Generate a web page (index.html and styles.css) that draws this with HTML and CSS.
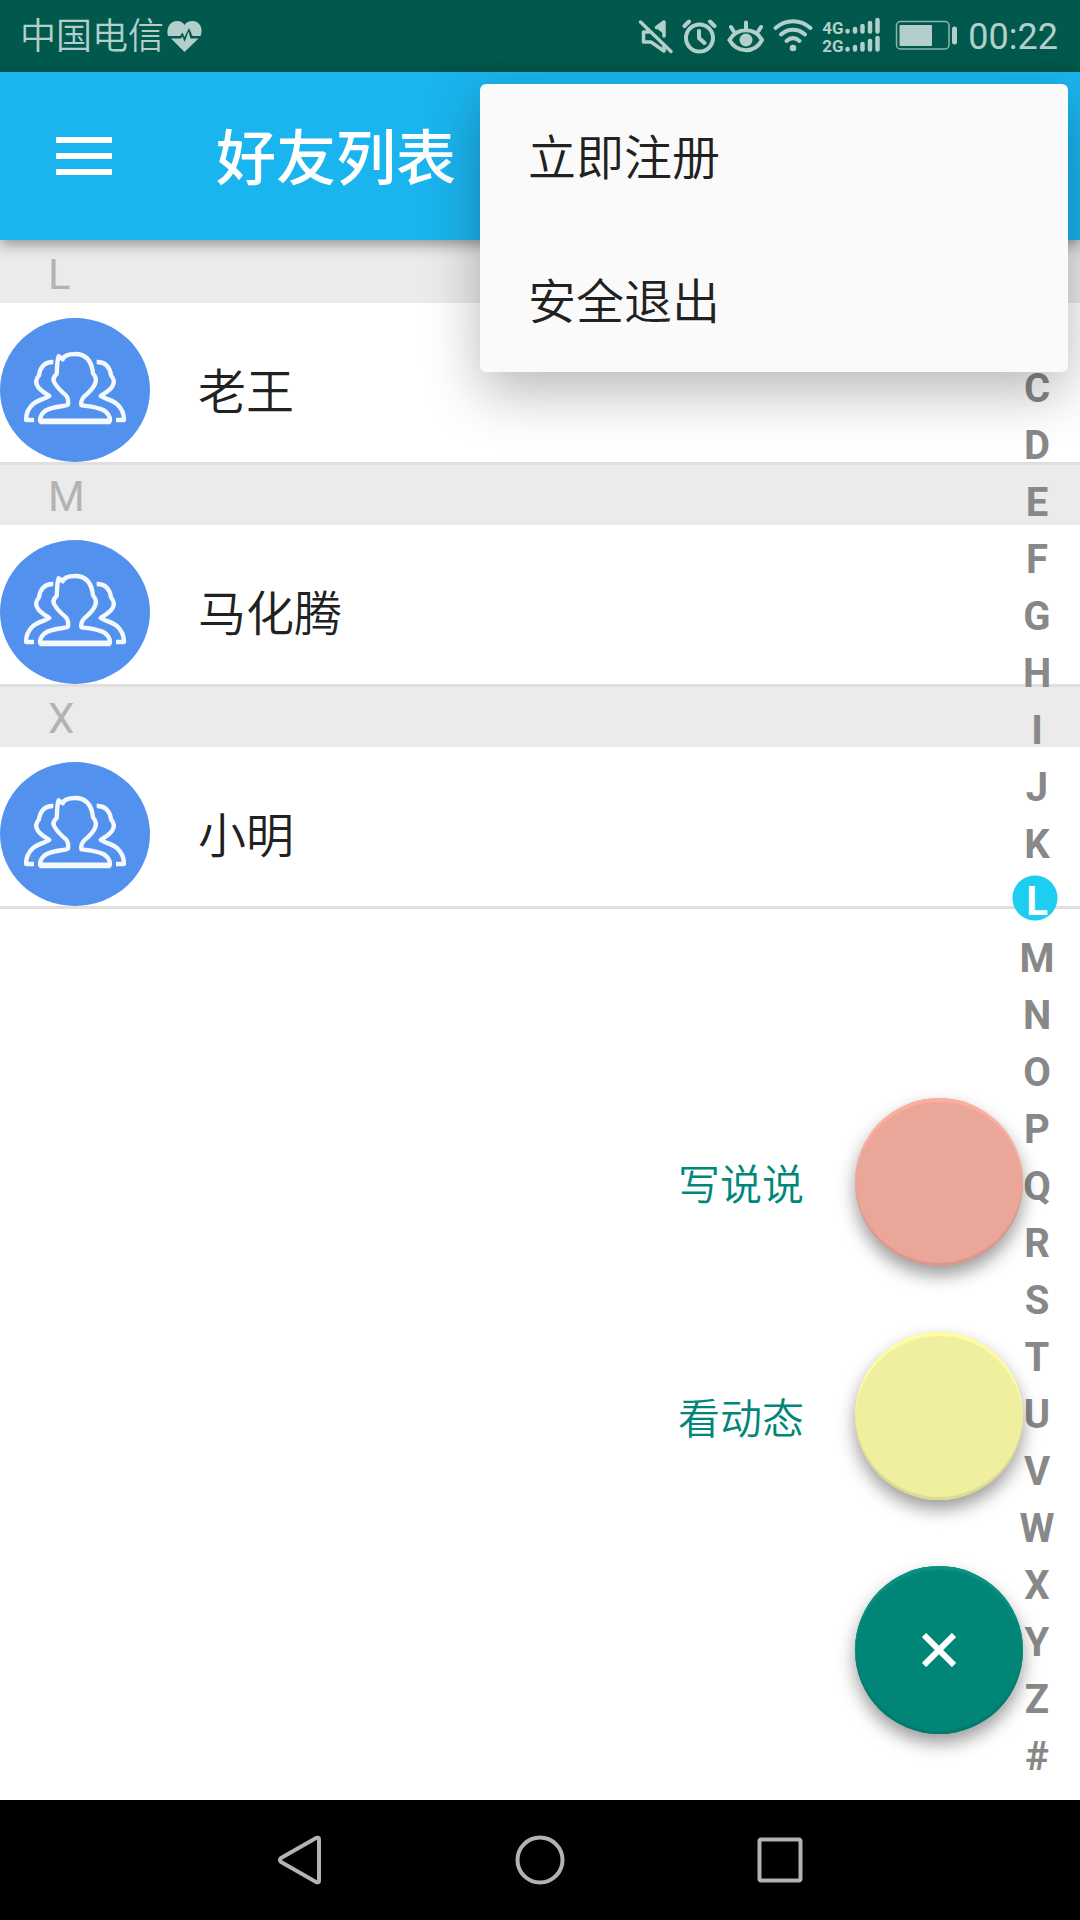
FILE: index.html
```html
<!DOCTYPE html>
<html lang="zh-CN">
<head>
<meta charset="utf-8">
<meta name="viewport" content="width=device-width, initial-scale=1">
<title>好友列表</title>
<link rel="stylesheet" href="styles.css">
</head>
<body>
<svg class="defs" aria-hidden="true">
  <symbol id="avatar" viewBox="0 0 450 432" preserveAspectRatio="none">
    <ellipse cx="225" cy="216" rx="225" ry="216" fill="#5391ef"/>
    <g fill="none" stroke="#f4f8ff" stroke-width="13" stroke-linejoin="round">
      <path d="M160 132C134 131 120 148 117 172C108 182 106 194 113 205C119 217 133 224 148 234C138 243 116 243 98 259C82 274 78 290 78 306H102"/>
      <path d="M290 132C316 131 330 148 333 172C342 182 344 194 337 205C331 217 317 224 302 234C312 243 334 243 352 259C368 274 372 290 372 306H348"/>
      <path d="M176 115L188 124C192 112 208 108 225 108C256 108 275 128 279 166C288 176 291 187 284 200C278 214 264 226 252 236C242 246 243 254 244 262C262 264 290 266 310 276C326 285 330 296 330 308H120C120 296 124 285 140 276C160 266 188 266 204 260C206 246 205 240 198 232C186 222 172 208 166 198C158 188 158 178 170 168C172 150 170 130 176 115Z"/>
      <path d="M118 312H332" stroke-width="14"/>
    </g>
  </symbol>
</svg>

<div class="status-bar">
  <div class="carrier">
    <span>中国电信</span>
    <svg width="36" height="36" viewBox="167 19 36 36" aria-hidden="true">
      <path fill="#b3cfcb" d="M184.500 52L171 38.500H181L182.500 36.500L184.500 42L188.500 31.500L190.500 38.500H198.500ZM168 36C166 30 169 21 177 21C181 21 183.500 23 184.500 25C186 22.500 189 21 192.500 21C200 21 203.500 29 200.500 36H192.500L189 28L184.500 37L182.500 32.500L180 36Z"/>
    </svg>
  </div>
  <div class="indicators">
    <svg width="36" height="72" viewBox="638 0 36 72" fill="none" stroke="#b3cfcb" stroke-width="3.500" stroke-linecap="round" stroke-linejoin="round" aria-hidden="true">
      <path d="M640.500 22L671 51.500M664 36V22L656.500 27.500M649 32H643.500V42H651L664 51V46"/>
      <path d="M656 28L664 22V34Z" fill="#b3cfcb" stroke="none"/>
    </svg>
    <svg width="36" height="72" viewBox="682 0 36 72" fill="none" stroke="#b3cfcb" stroke-width="4" stroke-linecap="round" aria-hidden="true">
      <circle cx="699.500" cy="38" r="13.500"/>
      <path d="M699 31V38L704.500 43M684.500 26L689 21.500M714.500 26L710 21.500"/>
    </svg>
    <svg width="38" height="72" viewBox="726 0 38 72" fill="none" stroke="#b3cfcb" stroke-width="4" stroke-linecap="round" aria-hidden="true">
      <path d="M729.500 40C737 27 755 27 762 40C755 53.500 737 53.500 729.500 40ZM746 22.500V29M731 27L733.500 31M761 27L758.500 31"/>
      <circle cx="746" cy="40" r="6.500" fill="#b3cfcb" stroke="none"/>
    </svg>
    <svg width="42" height="72" viewBox="772 0 42 72" fill="none" stroke="#b3cfcb" stroke-width="4" stroke-linecap="round" aria-hidden="true">
      <path d="M775.500 28C786 19 800 19 810.500 28M781 34.500C788 28 798 28 805 34.500M786.500 41C791 37 795 37 799.500 41"/>
      <circle cx="793" cy="48" r="3.300" fill="#b3cfcb" stroke="none"/>
    </svg>
    <div class="network">
      <span class="network-type">4G<br>2G</span>
      <svg width="38" height="72" viewBox="844 0 38 72" fill="none" stroke="#b3cfcb" stroke-width="4.500" stroke-linecap="round" aria-hidden="true">
        <path d="M847.500 31V31.500M855 29V31.500M862.500 26V31.500M870 23V31.500M877.500 20V31.500M847.500 49V49.500M855 47V49.500M862.500 44V49.500M870 41V49.500M877.500 38V49.500"/>
      </svg>
    </div>
    <svg width="70" height="72" viewBox="890 0 70 72" aria-hidden="true">
      <rect x="896.500" y="21.500" width="52.500" height="27.500" rx="4" fill="none" stroke="#8fb5af" stroke-width="1.500"/>
      <rect x="899.500" y="25" width="32.500" height="21" rx="1" fill="#b3cfcb"/>
      <rect x="952" y="26.500" width="5" height="18" rx="2.500" fill="#b3cfcb"/>
    </svg>
    <time>00:22</time>
  </div>
</div>

<header class="app-bar">
  <button class="menu-button" type="button" aria-label="菜单"><span></span><span></span><span></span></button>
  <h1>好友列表</h1>
  <div class="overflow-menu" role="menu">
    <button type="button" role="menuitem">立即注册</button>
    <button type="button" role="menuitem">安全退出</button>
  </div>
</header>

<main class="content">
  <div class="friends">
    <section>
      <h2 id="L">L</h2>
      <a class="friend" href="#L"><svg class="avatar" aria-hidden="true"><use href="#avatar"/></svg><span>老王</span></a>
    </section>
    <section>
      <h2 id="M">M</h2>
      <a class="friend" href="#M"><svg class="avatar" aria-hidden="true"><use href="#avatar"/></svg><span>马化腾</span></a>
    </section>
    <section>
      <h2 id="X">X</h2>
      <a class="friend" href="#X"><svg class="avatar" aria-hidden="true"><use href="#avatar"/></svg><span>小明</span></a>
    </section>
  </div>

  <nav class="letter-index" aria-label="字母索引">
    <a href="#A">A</a><a href="#B">B</a><a href="#C">C</a><a href="#D">D</a><a href="#E">E</a><a href="#F">F</a><a href="#G">G</a><a href="#H">H</a><a href="#I">I</a><a href="#J">J</a><a href="#K">K</a><a class="current" href="#L">L</a><a href="#M">M</a><a href="#N">N</a><a href="#O">O</a><a href="#P">P</a><a href="#Q">Q</a><a href="#R">R</a><a href="#S">S</a><a href="#T">T</a><a href="#U">U</a><a href="#V">V</a><a href="#W">W</a><a href="#X">X</a><a href="#Y">Y</a><a href="#Z">Z</a><a href="#other">#</a>
  </nav>

  <div class="actions">
    <div class="action">
      <label for="write">写说说</label>
      <button id="write" class="fab fab-write" type="button"></button>
    </div>
    <div class="action">
      <label for="browse">看动态</label>
      <button id="browse" class="fab fab-browse" type="button"></button>
    </div>
    <div class="action">
      <button class="fab fab-close" type="button" aria-label="关闭">
        <svg width="34" height="34" viewBox="0 0 34 34" aria-hidden="true"><path d="M2 2L32 32M32 2L2 32" stroke="#fff" stroke-width="6"/></svg>
      </button>
    </div>
  </div>
</main>

<footer class="system-nav">
  <button type="button" aria-label="返回">
    <svg width="60" height="60" viewBox="0 0 60 60"><path d="M11 28L46 8Q49 7 49 9V51Q49 53 46 52L11 32Q9 30 11 28Z"/></svg>
  </button>
  <button type="button" aria-label="主页">
    <svg width="60" height="60" viewBox="0 0 60 60"><circle cx="30" cy="30" r="22.500"/></svg>
  </button>
  <button type="button" aria-label="最近任务">
    <svg width="60" height="60" viewBox="0 0 60 60"><rect x="9.500" y="9.500" width="41" height="41" rx="2"/></svg>
  </button>
</footer>
</body>
</html>
```

FILE: styles.css
```css
* {
  box-sizing: border-box;
}

body {
  display: flex;
  flex-direction: column;
  min-height: 100vh;
  margin: 0;
  background: #fff;
  color: #212121;
  font-family: Roboto, "Noto Sans CJK SC", sans-serif;
}

button {
  margin: 0;
  padding: 0;
  border: 0;
  background: none;
  color: inherit;
  font: inherit;
}

a {
  color: inherit;
  text-decoration: none;
}

.defs {
  position: absolute;
  width: 0;
  height: 0;
}

/* Status bar */
.status-bar {
  display: flex;
  align-items: center;
  justify-content: space-between;
  height: 72px;
  padding: 2px 22px 0 20px;
  background: #00594c;
  color: #b3cfcb;
  font-size: 36px;
  line-height: 70px;
}

.carrier,
.indicators {
  display: flex;
  align-items: center;
}

.carrier {
  gap: 3px;
  font-weight: 350;
}

.indicators {
  gap: 8px;
}

.indicators svg {
  margin-top: -2px;
}

.network {
  display: flex;
  align-items: center;
}

.network-type {
  width: 22px;
  font-size: 17px;
  font-weight: 700;
  line-height: 18px;
}

/* App bar */
.app-bar {
  position: relative;
  z-index: 2;
  display: flex;
  align-items: center;
  height: 168px;
  padding-left: 56px;
  gap: 104px;
  background: #1ab4ee;
  box-shadow: 0 4px 14px rgba(0, 0, 0, 0.4);
}

.menu-button {
  display: flex;
  flex-direction: column;
  gap: 10px;
  width: 56px;
}

.menu-button span {
  height: 6px;
  background: #fff;
}

.app-bar h1 {
  margin: 0;
  padding-top: 8px;
  color: #fff;
  font-size: 60px;
  font-weight: 500;
  line-height: 84px;
}

.overflow-menu {
  position: absolute;
  top: 12px;
  right: 12px;
  display: flex;
  flex-direction: column;
  width: 588px;
  border-radius: 6px;
  background: #fafafa;
  box-shadow: 0 20px 56px rgba(0, 0, 0, 0.28);
}

.overflow-menu button {
  height: 144px;
  padding: 0 48px 4px;
  font-size: 48px;
  font-weight: 350;
  text-align: left;
}

/* Friend list */
.content {
  position: relative;
  flex: 1;
}

.friends {
  border-top: 3px solid #ebebeb;
}

.friends h2 {
  margin: 0;
  padding: 4px 48px 0;
  background: #ebebeb;
  color: #b4b3b3;
  font-size: 42px;
  font-weight: 400;
  line-height: 56px;
}

.friend {
  display: flex;
  align-items: center;
  gap: 48px;
  padding-top: 15px;
  border-bottom: 3px solid #dfdfdf;
  font-size: 48px;
  font-weight: 350;
}

.friend span {
  padding-bottom: 4px;
}

.avatar {
  width: 150px;
  height: 144px;
}

/* Letter index */
.letter-index {
  position: absolute;
  top: 6px;
  right: 0;
  display: flex;
  flex-direction: column;
  width: 86px;
  color: #888;
  font-size: 40px;
  font-weight: 700;
  line-height: 57px;
  text-align: center;
}

.letter-index .current {
  background: radial-gradient(circle at 41px 25px, #1ecef0 22px, transparent 23px);
  color: #fff;
}

/* Floating actions */
.actions {
  position: absolute;
  right: 57px;
  bottom: 66px;
  display: flex;
  flex-direction: column;
  align-items: flex-end;
  gap: 66px;
}

.action {
  display: flex;
  align-items: center;
  gap: 51px;
  color: #00877a;
  font-size: 42px;
  font-weight: 350;
}

.action label {
  padding-bottom: 2px;
}

.fab {
  display: flex;
  align-items: center;
  justify-content: center;
  width: 168px;
  height: 168px;
  border-radius: 50%;
}

.fab-write {
  background: #eaa698;
  box-shadow: inset 0 4px 1px #fdaf9f, inset 0 -3px 1px #d8988b, 0 9px 18px rgba(0, 0, 0, 0.4);
}

.fab-browse {
  background: #f0ef9f;
  box-shadow: inset 0 4px 1px #fffda0, inset 0 -3px 1px #dbda92, 0 9px 18px rgba(0, 0, 0, 0.4);
}

.fab-close {
  background: #008577;
  box-shadow: inset 0 4px 1px #0b9081, inset 0 -3px 1px #007a6d, 0 9px 18px rgba(0, 0, 0, 0.4);
}

/* System navigation */
.system-nav {
  display: flex;
  justify-content: center;
  height: 120px;
  background: #000;
}

.system-nav button {
  display: flex;
  align-items: center;
  justify-content: center;
  width: 240px;
}

.system-nav svg {
  fill: none;
  stroke: #b3b3b3;
  stroke-width: 4px;
}
```
